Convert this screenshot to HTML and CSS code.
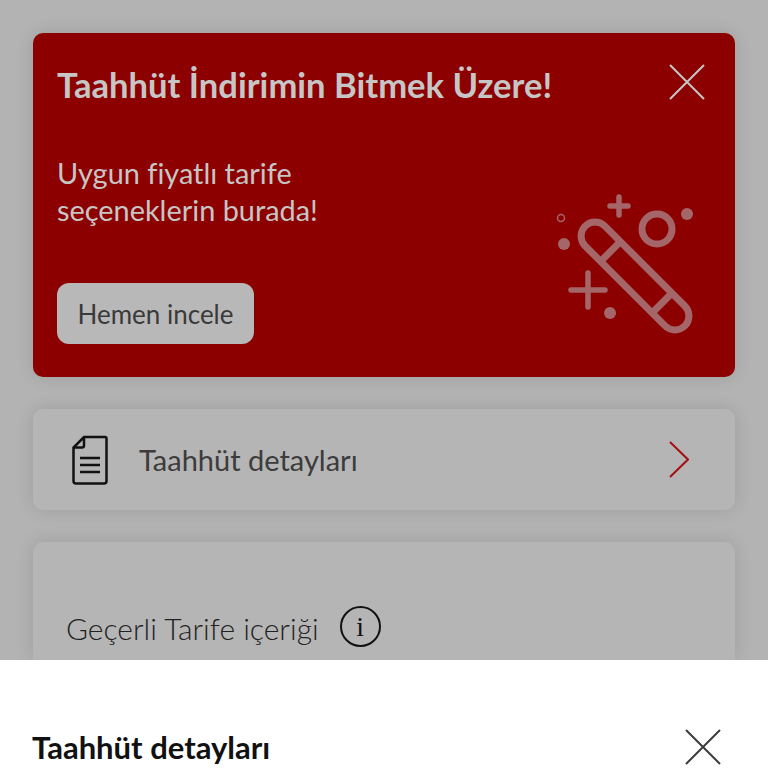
FILE: index.html
```html
<!DOCTYPE html>
<html lang="tr">
<head>
<meta charset="utf-8">
<title>Taahhüt detayları</title>
<link rel="stylesheet" href="styles.css">
</head>
<body>
<main class="page">
  <section class="promo">
    <div class="promo-head">
      <h1 class="promo-title">Taahhüt İndirimin Bitmek Üzere!</h1>
      <svg class="close close-light" viewBox="0 0 36 36"><path d="M1 1L35 35M35 1L1 35"/></svg>
    </div>
    <div class="promo-body">
      <div class="promo-copy">
        <p class="promo-text">Uygun fiyatlı tarife<br>seçeneklerin burada!</p>
        <button class="promo-btn">Hemen incele</button>
      </div>
      <svg class="wand" viewBox="0 0 170 170">
        <g class="wand-line">
          <rect x="24.500" y="83" width="141" height="28" rx="14" transform="rotate(45 95 97)"/>
          <path d="M60.500 82.500L80.500 62.500M112 134L132 114"/>
          <circle cx="117" cy="50" r="15"/>
        </g>
        <g class="wand-thin">
          <path d="M70 27H88M79 18V36M31 111H65M48 94V128"/>
        </g>
        <circle class="wand-ring" cx="21" cy="39" r="3.500"/>
        <g class="wand-dots">
          <circle cx="147" cy="35" r="6"/>
          <circle cx="24" cy="65" r="6"/>
          <circle cx="70" cy="134" r="6"/>
        </g>
      </svg>
    </div>
  </section>

  <a class="row">
    <svg class="doc" viewBox="0 0 36 50">
      <path d="M12 2H33a1.500 1.500 0 0 1 1.500 1.500V46a2.500 2.500 0 0 1-2.500 2.500H4A2.500 2.500 0 0 1 1.500 46V12.500ZM12 2V10.500a2 2 0 0 1-2 2H1.500M8 23H28M8 30H28M8 37H28"/>
    </svg>
    <span class="row-label">Taahhüt detayları</span>
    <svg class="chevron" viewBox="0 0 20 37"><path d="M1 1L19 18.500L1 36"/></svg>
  </a>

  <section class="tariff">
    <span class="tariff-label">Geçerli Tarife içeriği</span>
    <span class="info">i</span>
  </section>
</main>
<aside class="sheet">
  <h2 class="sheet-title">Taahhüt detayları</h2>
  <svg class="close close-dark" viewBox="0 0 36 36"><path d="M1 1L35 35M35 1L1 35"/></svg>
</aside>
</body>
</html>
```
FILE: styles.css
```css
* { box-sizing: border-box; }
html, body { margin: 0; height: 768px; overflow: hidden; }
body {
  font-family: "Lato", "Noto Sans", sans-serif;
  background: #fff;
}
.page {
  height: 660px;
  overflow: hidden;
  padding: 33px 33px 0;
  background: #b3b3b3;
  display: flex;
  flex-direction: column;
  gap: 32px;
}
.promo {
  flex: none;
  height: 344px;
  background: #8c0000;
  border-radius: 10px;
  padding: 30px 30px 33px 24px;
  display: flex;
  flex-direction: column;
  box-shadow: 0 0 18px rgba(0,0,0,.12);
}
.promo-head { display: flex; justify-content: space-between; align-items: flex-start; }
.promo-title {
  margin: -1px 0 0;
  font-size: 34.600px;
  line-height: 46px;
  font-weight: 700;
  color: #c6c6c6;
}
.close { width: 36px; height: 36px; flex: none; fill: none; stroke-width: 2; }
.close-light { stroke: #c6c6c6; margin-top: 1px; }
.close-dark { stroke: #3c3c3c; margin-top: 2px; }
.promo-body { flex: 1; display: flex; justify-content: space-between; position: relative; }
.promo-copy { display: flex; flex-direction: column; justify-content: space-between; }
.promo-text {
  margin: 46px 0 0;
  font-size: 28.900px;
  line-height: 37px;
  color: #c6c6c6;
}
.promo-btn {
  align-self: flex-start;
  width: 197px;
  height: 61px;
  border: 0;
  border-radius: 12px;
  background: #b8b8b8;
  color: #3a3a3a;
  font: 26px "Lato", sans-serif;
}
.wand { position: absolute; right: -5px; top: 71px; width: 170px; height: 170px; fill: none; }
.wand-line { stroke: #a5666a; stroke-width: 7; }
.wand-thin { stroke: #a5666a; stroke-width: 5.500; stroke-linecap: round; }
.wand-ring { stroke: #a5666a; stroke-width: 1.500; }
.wand-dots { fill: #a5666a; }
.row {
  flex: none;
  height: 101px;
  background: #b5b5b5;
  border-radius: 10px;
  display: flex;
  align-items: center;
  padding: 0 46px 0 39px;
  box-shadow: 0 0 18px rgba(0,0,0,.12);
}
.doc { width: 36px; height: 50px; fill: none; stroke: #111; stroke-width: 2.500; }
.row-label { flex: 1; margin-left: 31px; font-size: 29px; color: #3c3c3c; }
.chevron { width: 20px; height: 37px; fill: none; stroke: #a50f14; stroke-width: 2; }
.tariff {
  flex: 1;
  background: #b5b5b5;
  border-radius: 10px 10px 0 0;
  padding: 64px 0 0 33px;
  display: flex;
  align-items: flex-start;
  gap: 21px;
  box-shadow: 0 0 18px rgba(0,0,0,.12);
}
.tariff-label { font-size: 30px; line-height: 44px; font-weight: 300; color: #222; }
.info {
  width: 41px;
  height: 41px;
  border: 2px solid #111;
  border-radius: 50%;
  display: flex;
  align-items: center;
  justify-content: center;
  font: 28px "Liberation Serif", serif;
  color: #111;
}
.sheet {
  height: 108px;
  padding: 67px 47px 0 32px;
  display: flex;
  justify-content: space-between;
  align-items: flex-start;
  background: #fff;
}
.sheet-title { margin: 0; font-size: 31px; line-height: 40px; font-weight: 700; color: #111; }
```
